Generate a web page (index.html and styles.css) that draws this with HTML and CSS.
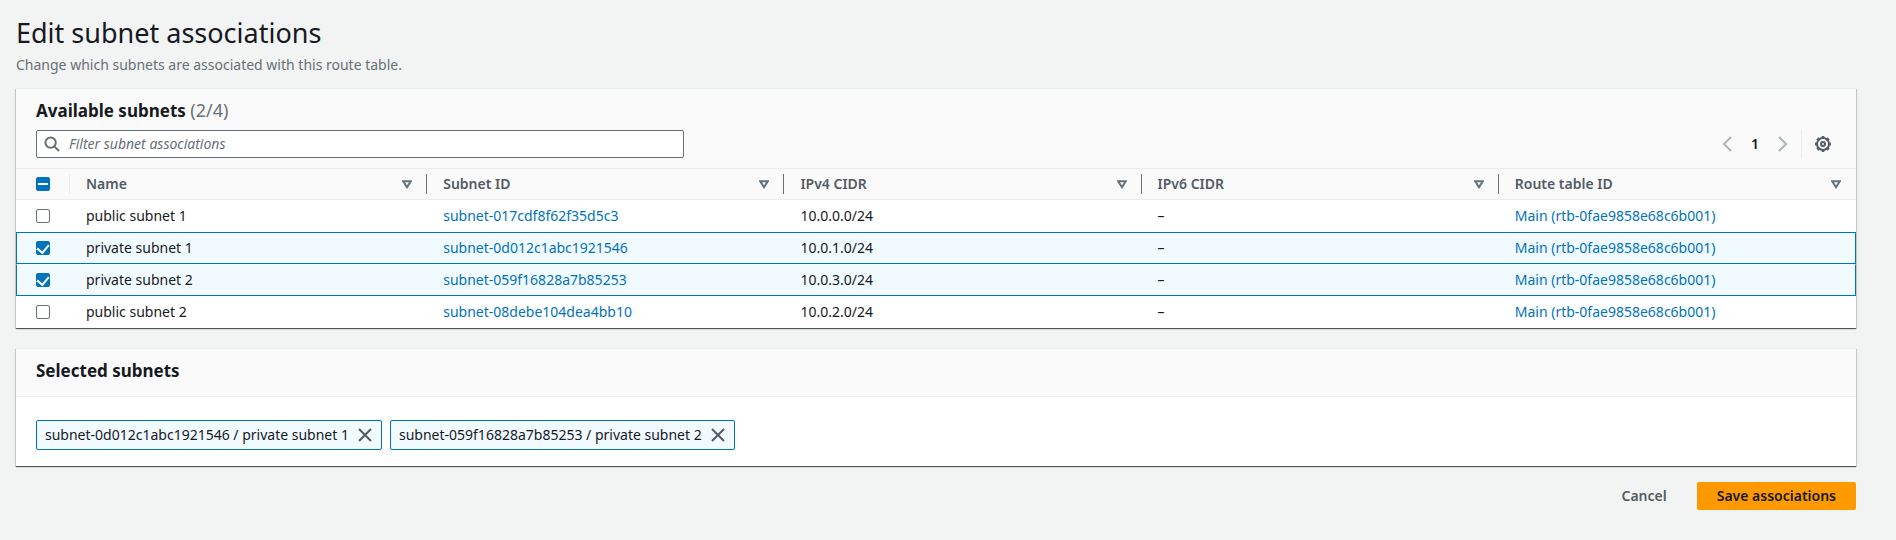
FILE: index.html
```html
<!DOCTYPE html>
<html lang="en">
<head>
<meta charset="utf-8">
<meta name="viewport" content="width=device-width, initial-scale=1">
<title>Edit subnet associations</title>
<link rel="stylesheet" href="styles.css">
</head>
<body>
<svg class="sprite" aria-hidden="true">
  <symbol id="sort" viewBox="0 0 10 9"><path d="M1.2 1.2h7.6L5 7.2z"/></symbol>
  <symbol id="close" viewBox="0 0 16 16"><path d="M2 2l12 12M14 2L2 14"/></symbol>
</svg>
<main class="page">
  <header class="page-header">
    <h1 class="page-title">Edit subnet associations</h1>
    <p class="page-description">Change which subnets are associated with this route table.</p>
  </header>

  <section class="card" aria-labelledby="available-title">
    <div class="card-header">
      <h2 class="card-title" id="available-title">Available subnets <span class="counter">(2/4)</span></h2>
      <div class="tools">
        <label class="search">
          <svg class="search-icon" viewBox="0 0 16 16" aria-hidden="true"><circle cx="6.6" cy="6.6" r="5.2"/><path d="M10.4 10.4L15 15"/></svg>
          <input class="search-input" type="text" placeholder="Filter subnet associations" aria-label="Filter subnet associations">
        </label>
        <div class="controls">
          <nav class="pagination" aria-label="Pages">
            <button class="icon-button arrow" type="button" aria-label="Previous page"><svg viewBox="0 0 16 16"><path d="M12 1L5 8l7 7"/></svg></button>
            <button class="icon-button page-number" type="button" aria-current="page">1</button>
            <button class="icon-button arrow" type="button" aria-label="Next page"><svg viewBox="0 0 16 16"><path d="M4 1l7 7-7 7"/></svg></button>
          </nav>
          <div class="preferences">
            <button class="icon-button gear" type="button" aria-label="Preferences"><svg viewBox="0 0 16 16"><circle cx="8" cy="8" r="6"/><circle class="teeth" cx="8" cy="8" r="7" pathLength="80"/><circle cx="8" cy="8" r="2"/></svg></button>
          </div>
        </div>
      </div>
    </div>
    <table class="table">
      <thead>
        <tr>
          <th class="select-cell" scope="col"><input class="checkbox mixed" type="checkbox" aria-label="Select all subnets" aria-checked="mixed"></th>
          <th scope="col"><div class="heading">Name<svg class="sort"><use href="#sort"/></svg></div></th>
          <th scope="col"><div class="heading">Subnet ID<svg class="sort"><use href="#sort"/></svg></div></th>
          <th scope="col"><div class="heading">IPv4 CIDR<svg class="sort"><use href="#sort"/></svg></div></th>
          <th scope="col"><div class="heading">IPv6 CIDR<svg class="sort"><use href="#sort"/></svg></div></th>
          <th scope="col"><div class="heading">Route table ID<svg class="sort"><use href="#sort"/></svg></div></th>
        </tr>
      </thead>
      <tbody>
        <tr>
          <td class="select-cell"><input class="checkbox" type="checkbox" aria-label="Select public subnet 1"></td>
          <td>public subnet 1</td>
          <td><a href="#">subnet-017cdf8f62f35d5c3</a></td>
          <td>10.0.0.0/24</td>
          <td>–</td>
          <td><a href="#">Main (rtb-0fae9858e68c6b001)</a></td>
        </tr>
        <tr class="selected">
          <td class="select-cell"><input class="checkbox" type="checkbox" checked aria-label="Select private subnet 1"></td>
          <td>private subnet 1</td>
          <td><a href="#">subnet-0d012c1abc1921546</a></td>
          <td>10.0.1.0/24</td>
          <td>–</td>
          <td><a href="#">Main (rtb-0fae9858e68c6b001)</a></td>
        </tr>
        <tr class="selected">
          <td class="select-cell"><input class="checkbox" type="checkbox" checked aria-label="Select private subnet 2"></td>
          <td>private subnet 2</td>
          <td><a href="#">subnet-059f16828a7b85253</a></td>
          <td>10.0.3.0/24</td>
          <td>–</td>
          <td><a href="#">Main (rtb-0fae9858e68c6b001)</a></td>
        </tr>
        <tr>
          <td class="select-cell"><input class="checkbox" type="checkbox" aria-label="Select public subnet 2"></td>
          <td>public subnet 2</td>
          <td><a href="#">subnet-08debe104dea4bb10</a></td>
          <td>10.0.2.0/24</td>
          <td>–</td>
          <td><a href="#">Main (rtb-0fae9858e68c6b001)</a></td>
        </tr>
      </tbody>
    </table>
  </section>

  <section class="card" aria-labelledby="selected-title">
    <div class="card-header compact">
      <h2 class="card-title" id="selected-title">Selected subnets</h2>
    </div>
    <div class="tokens">
      <span class="token">subnet-0d012c1abc1921546 / private subnet 1<button class="token-remove" type="button" aria-label="Remove private subnet 1"><svg viewBox="0 0 16 16"><use href="#close"/></svg></button></span>
      <span class="token">subnet-059f16828a7b85253 / private subnet 2<button class="token-remove" type="button" aria-label="Remove private subnet 2"><svg viewBox="0 0 16 16"><use href="#close"/></svg></button></span>
    </div>
  </section>

  <footer class="actions">
    <button class="button link" type="button">Cancel</button>
    <button class="button primary" type="submit">Save associations</button>
  </footer>
</main>
</body>
</html>
```
FILE: styles.css
```css
* {
  box-sizing: border-box;
}

body {
  margin: 0;
  background: #f2f3f3;
  color: #16191f;
  font-family: "Noto Sans", sans-serif;
  font-size: 14px;
  line-height: 22px;
}

button,
input {
  font: inherit;
}

svg {
  fill: none;
  stroke: currentColor;
  stroke-width: 2;
}

.sprite {
  display: none;
}

.page {
  padding: 16px 40px 16px 16px;
}

.page-header {
  margin-bottom: 12px;
}

.page-title {
  margin: 0 0 4px;
  font-size: 27px;
  font-weight: 400;
  line-height: 34px;
}

.page-description {
  margin: 0;
  color: #687078;
}

.card {
  margin-bottom: 20px;
  border-top: 1px solid #eaeded;
  background: #fff;
  box-shadow: 0 1px 1px rgba(0, 28, 36, 0.3), 1px 1px 1px rgba(0, 28, 36, 0.15), -1px 1px 1px rgba(0, 28, 36, 0.15), 0 1px 0 #879596;
}

.card-header {
  padding: 10px 20px;
  border-bottom: 1px solid #eaeded;
  background: #fafafa;
}

.card-header.compact {
  padding-top: 11px;
  padding-bottom: 14px;
}

.card-title {
  margin: 0;
  font-size: 17px;
  font-weight: 700;
  line-height: 22px;
}

.counter {
  color: #687078;
  font-size: 18px;
  font-weight: 400;
}

.tools {
  display: flex;
  justify-content: space-between;
  align-items: center;
  margin-top: 8px;
}

.search {
  display: flex;
  align-items: center;
  gap: 9px;
  flex: 0 1 36%;
  height: 28px;
  padding: 0 7px;
  border: 1px solid #687078;
  border-radius: 2px;
  background: #fff;
}

.search-icon {
  flex: none;
  width: 16px;
  height: 16px;
  color: #687078;
}

.search-input {
  flex: 1;
  min-width: 0;
  padding: 0;
  border: 0;
  outline: 0;
  background: none;
}

.search-input::placeholder {
  color: #687078;
  font-style: italic;
}

.controls,
.pagination {
  display: flex;
  align-items: center;
}

.pagination {
  gap: 12px;
  padding-right: 10px;
}

.preferences {
  padding: 2px 5px 2px 13px;
  border-left: 1px solid #eaeded;
}

.icon-button {
  display: flex;
  align-items: center;
  justify-content: center;
  width: 16px;
  height: 24px;
  padding: 0;
  border: 0;
  background: none;
  color: #545b64;
}

.icon-button svg {
  width: 16px;
  height: 16px;
}

.teeth {
  stroke-dasharray: 5;
  stroke-dashoffset: 2.5;
}

.arrow {
  color: #aab7b8;
}

.page-number {
  color: #16191f;
  font-weight: 600;
}

.table {
  width: 100%;
  table-layout: fixed;
  border-spacing: 0;
}

th,
td {
  padding: 4px 14px 4px 16px;
  text-align: left;
}

th {
  padding: 5px 0;
  border-bottom: 1px solid #eaeded;
  background: #fafafa;
  color: #545b64;
  font-weight: 600;
}

td {
  border-top: 1px solid transparent;
  border-bottom: 1px solid transparent;
}

.select-cell {
  width: 54px;
  padding: 0 0 0 20px;
}

th.select-cell {
  background: linear-gradient(#eaeded, #eaeded) right center / 1px 20px no-repeat #fafafa;
}

.heading {
  display: flex;
  align-items: center;
  justify-content: space-between;
  padding: 0 14px 0 16px;
  border-right: 1px solid #687078;
  line-height: 20px;
}

th:last-child .heading {
  border-right-color: transparent;
}

.sort {
  width: 10px;
  height: 9px;
  color: #687078;
}

.selected td {
  border-bottom-color: #0073bb;
  background: #f1faff;
}

.selected td:first-child {
  border-left: 1px solid #0073bb;
  padding-left: 19px;
}

.selected td:last-child {
  border-right: 1px solid #0073bb;
}

tr:not(.selected) + .selected td {
  border-top-color: #0073bb;
}

a {
  color: #0073bb;
  text-decoration: none;
}

.checkbox {
  appearance: none;
  display: grid;
  place-items: center;
  width: 14px;
  height: 14px;
  margin: 0;
  border: 1px solid #687078;
  border-radius: 2px;
  background: #fff;
}

.checkbox:checked,
.checkbox.mixed {
  border-color: #0073bb;
  background: #0073bb;
}

.checkbox:checked::before {
  content: "";
  width: 6px;
  height: 9px;
  margin-bottom: 3px;
  border: solid #fff;
  border-width: 0 2px 2px 0;
  transform: rotate(40deg);
}

.checkbox.mixed::before {
  content: "";
  width: 10px;
  height: 2px;
  background: #fff;
}

.tokens {
  display: flex;
  flex-wrap: wrap;
  gap: 8px;
  padding: 23px 20px 16px;
}

.token {
  display: flex;
  align-items: center;
  gap: 8px;
  padding: 3px 8px;
  border: 1px solid #0073bb;
  border-radius: 2px;
  background: #f1faff;
}

.token-remove {
  width: 16px;
  height: 16px;
  padding: 0;
  border: 0;
  background: none;
  color: #545b64;
}

.token-remove svg {
  display: block;
}

.actions {
  display: flex;
  justify-content: flex-end;
  gap: 10px;
  margin-top: -4px;
}

.button {
  padding: 3px 20px;
  border: 0;
  border-radius: 2px;
  background: none;
  color: #545b64;
  font-weight: 600;
}

.primary {
  background: #ff9900;
  color: #16191f;
}
```
